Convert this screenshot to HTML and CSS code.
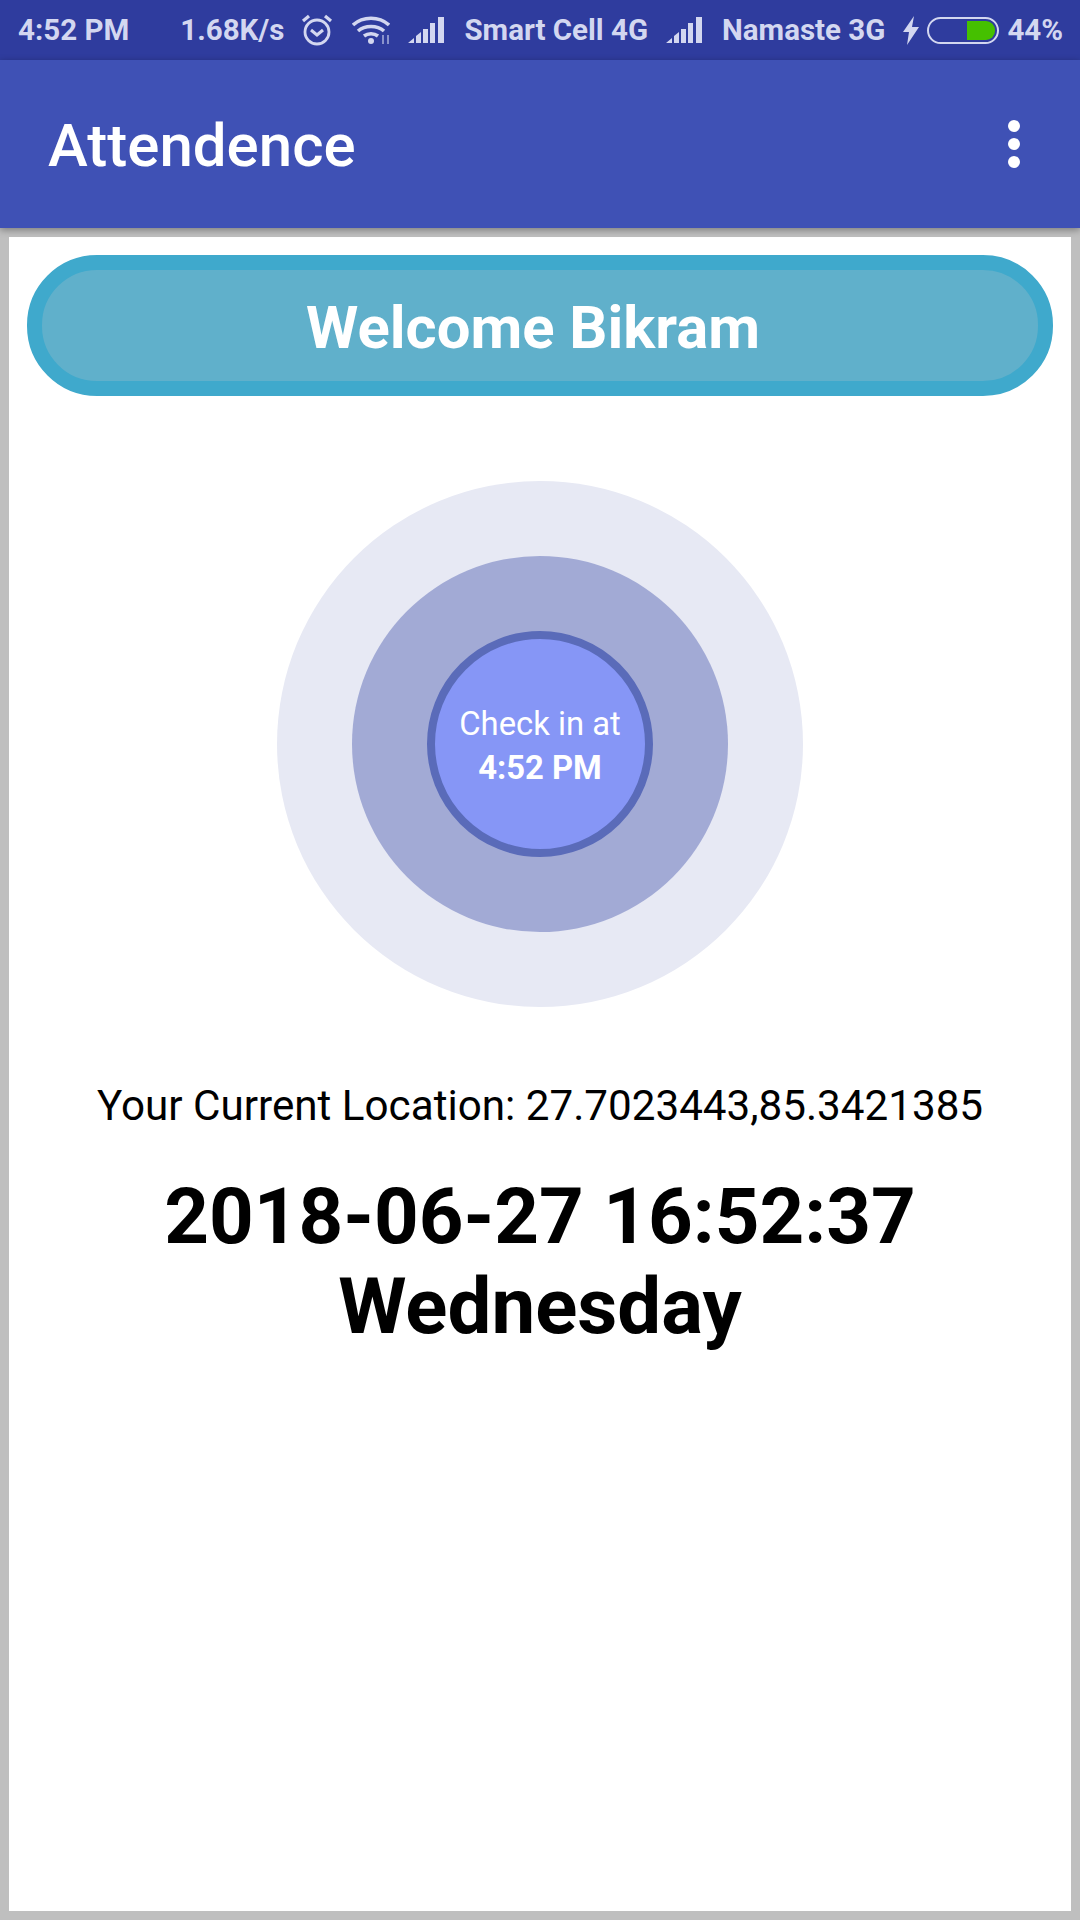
FILE: index.html
```html
<!DOCTYPE html>
<html lang="en">
<head>
    <meta charset="UTF-8">
    <meta name="viewport" content="width=device-width, initial-scale=1.0">
    <title>Attendence</title>
    <link rel="stylesheet" href="styles.css">
</head>
<body>
    <!-- Status bar -->
    <div class="status-bar">
        <span class="status-time">4:52 PM</span>
        <span class="status-speed">1.68K/s</span>
        <svg class="icon-alarm" viewBox="0 0 32 32" width="32" height="32" fill="none" stroke="#d3d7f0">
            <circle cx="16" cy="18" r="12" stroke-width="2.8"/>
            <path d="M10 16l6 5 6-5" stroke-width="3"/>
            <path d="M2 7l6-5M30 7l-6-5" stroke-width="3.2"/>
        </svg>
        <svg class="icon-wifi" viewBox="0 0 38 28" width="38" height="28" fill="none" stroke="#d3d7f0" stroke-width="3.6">
            <path d="M1 9c10-9 26-9 36 0"/>
            <path d="M6 15c7-6 19-6 26 0"/>
            <path d="M12 20c4-3 10-3 14 0"/>
            <circle cx="19" cy="25" r="3" fill="#d3d7f0" stroke="none"/>
            <path d="M31 19v9M36 19v9" stroke="#8a93cc" stroke-width="2"/>
        </svg>
        <svg class="icon-signal" viewBox="0 0 36 26" width="36" height="26" fill="#d3d7f0">
            <path d="M0 26l6-5v5zM8 19l5-4v11H8zM15 12h5v14h-5zM22 6h5v20h-5zM30 0h6v26h-6z"/>
        </svg>
        <span class="status-carrier">Smart Cell 4G</span>
        <svg class="icon-signal" viewBox="0 0 36 26" width="36" height="26" fill="#d3d7f0">
            <path d="M0 26l6-5v5zM8 19l5-4v11H8zM15 12h5v14h-5zM22 6h5v20h-5zM30 0h6v26h-6z"/>
        </svg>
        <span class="status-carrier">Namaste 3G</span>
        <svg class="icon-bolt" viewBox="0 0 16 29" width="16" height="29" fill="#d3d7f0">
            <path d="M11 0L0 16h6L4 29l12-18H9z"/>
        </svg>
        <div class="battery"><div class="battery-level"></div></div>
        <span class="status-percent">44%</span>
    </div>

    <!-- App bar -->
    <header class="app-bar">
        <h1>Attendence</h1>
        <div class="menu-dots"><span></span><span></span><span></span></div>
    </header>

    <!-- Content -->
    <main class="content">
        <div class="welcome">Welcome Bikram</div>

        <div class="ring-outer">
            <div class="ring-middle">
                <div class="check-in">
                    <span>Check in at</span>
                    <strong>4:52 PM</strong>
                </div>
            </div>
        </div>

        <p class="location">Your Current Location: 27.7023443,85.3421385</p>
        <p class="datetime">2018-06-27 16:52:37<br>Wednesday</p>
    </main>
</body>
</html>
```

FILE: styles.css
```css
/* Theme Colors */
:root {
    --primary: #3f51b5;
    --primary-dark: #2f3c9e;
    --status-text: #d3d7f0;
    --frame: #bfbfbf;
}

html, body {
    height: 100%;
}

body {
    margin: 0;
    font-family: Roboto, "Liberation Sans", sans-serif;
    background-color: var(--frame);
    color: #000;
    display: flex;
    flex-direction: column;
}

/* Status bar */
.status-bar {
    height: 60px;
    flex: none;
    box-sizing: border-box;
    padding-left: 18px;
    background-color: var(--primary-dark);
    color: var(--status-text);
    font-size: 29.5px;
    font-weight: 700;
    display: flex;
    align-items: center;
}

.status-bar svg {
    flex: none;
}

.status-speed {
    margin-left: 51px;
}

.icon-alarm {
    margin-left: 17px;
}

.icon-wifi {
    margin-left: 19px;
}

.icon-signal {
    margin-left: 18px;
}

.status-carrier {
    margin-left: 20px;
}

.icon-bolt {
    margin-left: 18px;
}

.battery {
    width: 72px;
    height: 27px;
    margin-left: 8px;
    box-sizing: border-box;
    border: 2px solid var(--status-text);
    border-radius: 14px;
    padding: 2px;
    display: flex;
    justify-content: flex-end;
}

.battery-level {
    width: 28px;
    background-color: #45c000;
    border-radius: 0 9px 9px 0;
}

.status-percent {
    margin-left: 8px;
}

/* App bar */
.app-bar {
    height: 168px;
    flex: none;
    box-sizing: border-box;
    padding: 3px 60px 0 48px;
    background-color: var(--primary);
    color: #fff;
    display: flex;
    align-items: center;
    justify-content: space-between;
    box-shadow: 0 2px 7px rgba(0, 0, 0, 0.35);
    position: relative;
}

.app-bar h1 {
    margin: 0;
    font-size: 60px;
    font-weight: 500;
}

.menu-dots {
    margin-top: -3px;
    display: flex;
    flex-direction: column;
    gap: 6px;
}

.menu-dots span {
    width: 12px;
    height: 12px;
    background-color: #fff;
    border-radius: 50%;
}

/* Content */
.content {
    flex: 1;
    margin: 9px;
    background-color: #fff;
    display: flex;
    flex-direction: column;
    align-items: center;
}

.welcome {
    width: 1026px;
    height: 141px;
    margin-top: 18px;
    box-sizing: border-box;
    border: 15px solid #3fa9cc;
    border-radius: 70px;
    padding: 5px 14px 0 0;
    background-color: #60b0cb;
    color: #fff;
    font-size: 59.8px;
    font-weight: 700;
    display: flex;
    align-items: center;
    justify-content: center;
}

.ring-outer {
    width: 526px;
    height: 526px;
    margin-top: 85px;
    border-radius: 50%;
    background-color: #e7e9f4;
    display: flex;
    align-items: center;
    justify-content: center;
}

.ring-middle {
    width: 376px;
    height: 376px;
    border-radius: 50%;
    background-color: #a2aad5;
    display: flex;
    align-items: center;
    justify-content: center;
}

.check-in {
    width: 226px;
    height: 226px;
    box-sizing: border-box;
    border: 8px solid #5a6bb9;
    border-radius: 50%;
    padding-top: 4px;
    background-color: #8696f6;
    color: #fff;
    font-size: 32.8px;
    line-height: 44px;
    display: flex;
    flex-direction: column;
    align-items: center;
    justify-content: center;
}

.location {
    margin: 75px 0 0;
    font-size: 42.2px;
    line-height: 48px;
}

.datetime {
    margin: 42px 0 0;
    font-size: 78px;
    font-weight: 700;
    line-height: 90px;
    text-align: center;
}
```
